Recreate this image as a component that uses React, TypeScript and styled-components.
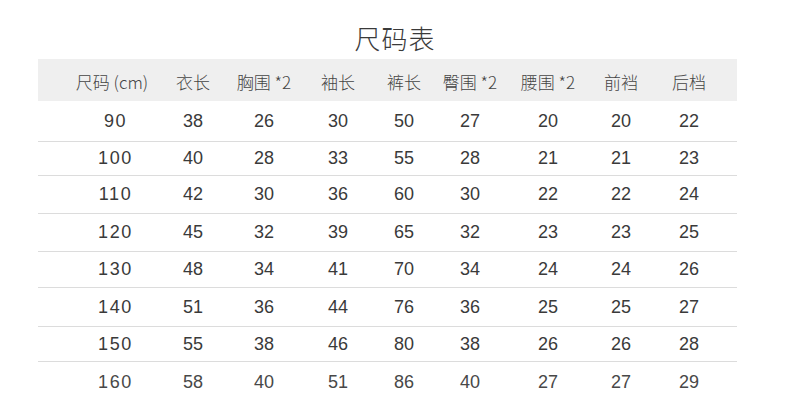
import React from "react";
import styled, { createGlobalStyle } from "styled-components";

const Global = createGlobalStyle`
  html, body { margin: 0; padding: 0; background: #fff; }
  body { font-family: "Liberation Sans", "Noto Sans CJK SC", sans-serif; color: #333; }
`;

const Page = styled.div`
  width: 790px;
  height: 413px;
  overflow: hidden;
  background: #fff;
`;

const Title = styled.h1`
  margin: 0;
  height: 59px;
  padding-top: 23px;
  box-sizing: border-box;
  text-align: center;
  font-family: "Noto Sans CJK SC", sans-serif;
  font-weight: 300;
  font-size: 26px;
  line-height: 30px;
  color: #3a3a3a;
  letter-spacing: 1px;
`;

const Table = styled.div`
  margin-left: 38px;
  width: 699px;
`;

const cols = "100px 62px 80px 68px 64px 68px 88px 58px 78px";

const HeaderRow = styled.div`
  display: grid;
  grid-template-columns: ${cols};
  padding-left: 24px;
  height: 42px;
  background: #efefef;
  align-items: center;
`;

const HeadCell = styled.div`
  display: flex;
  justify-content: center;
  white-space: nowrap;
  font-family: "Noto Sans CJK SC", sans-serif;
  font-weight: 300;
  font-size: 17px;
  color: #444;
  padding-top: 2px;
`;

const Row = styled.div<{ $h: number; $line: boolean }>`
  display: grid;
  grid-template-columns: ${cols};
  padding-left: 24px;
  height: ${(p) => p.$h}px;
  box-sizing: border-box;
  align-items: center;
  border-bottom: ${(p) => (p.$line ? "1px solid #dcdcdc" : "none")};
`;

const Cell = styled.div<{ $first?: boolean; $strong?: boolean }>`
  display: flex;
  justify-content: center;
  white-space: nowrap;
  font-family: "Liberation Sans", sans-serif;
  font-size: 18px;
  color: ${(p) => (p.$strong ? "#484848" : "#3a3a3a")};
  font-weight: 400;
  letter-spacing: ${(p) => (p.$first ? "1.6px" : "0")};
  padding-left: ${(p) => (p.$first ? "7px" : "0")};
`;

const headers = ["尺码 (cm)", "衣长", "胸围 *2", "袖长", "裤长", "臀围 *2", "腰围 *2", "前裆", "后档"];

const data: number[][] = [
  [90, 38, 26, 30, 50, 27, 20, 20, 22],
  [100, 40, 28, 33, 55, 28, 21, 21, 23],
  [110, 42, 30, 36, 60, 30, 22, 22, 24],
  [120, 45, 32, 39, 65, 32, 23, 23, 25],
  [130, 48, 34, 41, 70, 34, 24, 24, 26],
  [140, 51, 36, 44, 76, 36, 25, 25, 27],
  [150, 55, 38, 46, 80, 38, 26, 26, 28],
  [160, 58, 40, 51, 86, 40, 27, 27, 29],
];

const heights = [41, 34, 38, 38, 36, 39, 35, 40];

export default function App() {
  return (
    <Page>
      <Global />
      <Title>尺码表</Title>
      <Table>
        <HeaderRow>
          {headers.map((h) => (
            <HeadCell key={h}>{h}</HeadCell>
          ))}
        </HeaderRow>
        {data.map((r, i) => (
          <Row key={r[0]} $h={heights[i]} $line={i < data.length - 1}>
            {r.map((v, j) => (
              <Cell key={j} $first={j === 0} $strong={i === data.length - 1}>
                {v}
              </Cell>
            ))}
          </Row>
        ))}
      </Table>
    </Page>
  );
}
